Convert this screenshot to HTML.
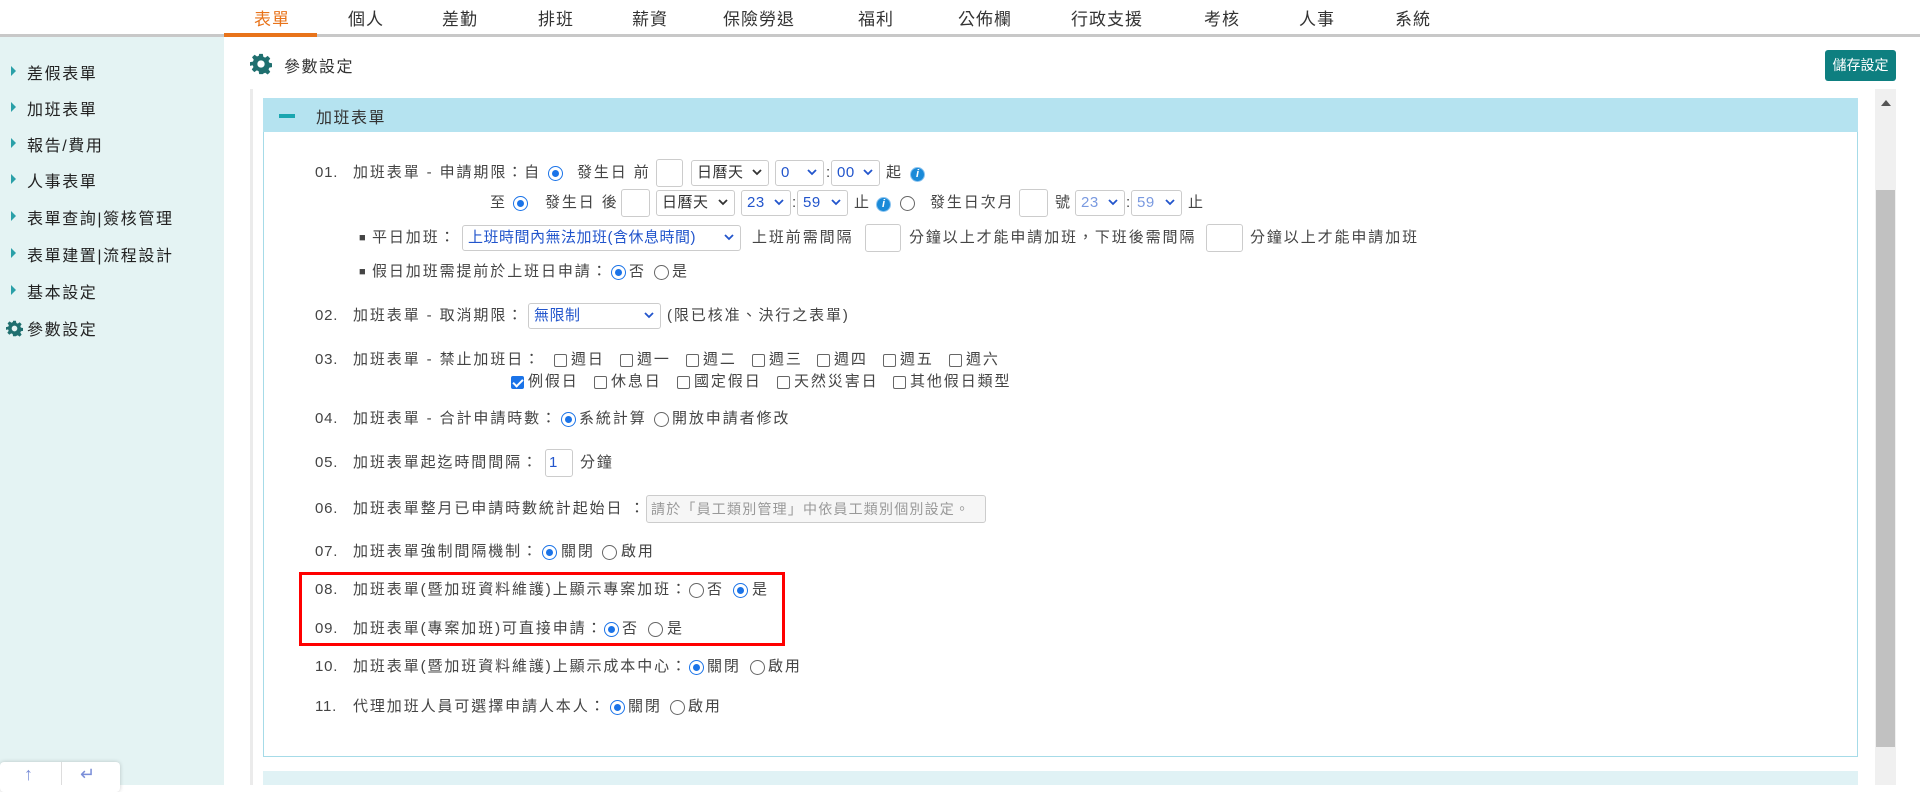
<!DOCTYPE html>
<html><head><meta charset="utf-8"><style>
*{margin:0;padding:0;box-sizing:border-box}
body{width:1920px;height:785px;overflow:hidden;background:#fff;font-family:"Liberation Sans","Noto Sans CJK TC",sans-serif;color:#444;position:relative}
.a{position:absolute;white-space:nowrap}
.nav{position:absolute;top:0;left:0;width:1920px;height:34px}
.nav span{position:absolute;top:5px;font-size:17px;color:#333;transform:translateX(-50%);white-space:nowrap;letter-spacing:1px}
.side{position:absolute;left:0;top:37px;width:224px;height:748px;background:#e4f3f3}
.side div{position:absolute;left:27px;font-size:16px;color:#222;letter-spacing:1.6px;white-space:nowrap}
.side div:before{content:"";position:absolute;left:-16px;top:6px;border-left:5px solid #2aa0a8;border-top:5px solid transparent;border-bottom:5px solid transparent}
.side div.g:before{display:none}
.r{position:absolute;left:0;height:24px;line-height:24px;font-size:15px;letter-spacing:1.9px;color:#444;width:1600px}
.r>*{position:absolute;top:0;white-space:nowrap}
.r>span:first-child{letter-spacing:.8px}
.rad{width:15px;height:15px;border:1px solid #666;border-radius:50%;top:5px;background:#fff}
.rad.on{border:1.5px solid #1a73e8}
.rad.on:after{content:"";position:absolute;left:2.5px;top:2.5px;width:7px;height:7px;border-radius:50%;background:#1a73e8}
.cb{width:13px;height:13px;border:1px solid #666;border-radius:2px;top:6px;background:#fff}
.cb.on{background:#1a73e8;border-color:#1a73e8}
.cb.on:after{content:"";position:absolute;left:3px;top:0px;width:4px;height:8px;border:solid #fff;border-width:0 2px 2px 0;transform:rotate(45deg)}
.sel{height:26px;top:-1px;border:1px solid #ccc;border-radius:3px;background:#fff;padding-left:5px;line-height:24px;color:#333;letter-spacing:.5px}
.sel.b{color:#2255cc}
.sel svg{position:absolute;right:6px;top:8px}
.inp{height:28px;top:-2px;border:1px solid #ccc;border-radius:3px;background:#fff}
.info{width:15px;height:15px;top:6px;border-radius:50%;background:#1a8ad8;color:#fff;font-size:11px;line-height:12px;text-align:center;font-weight:bold;letter-spacing:0;border:1.5px solid #8cc4f0}
</style></head><body>
<div class="nav">
<span style="left:272px;color:#e8731a">表單</span><span style="left:366px">個人</span><span style="left:460px">差勤</span><span style="left:556px">排班</span><span style="left:650px">薪資</span><span style="left:759px">保險勞退</span><span style="left:876px">福利</span><span style="left:985px">公佈欄</span><span style="left:1107px">行政支援</span><span style="left:1222px">考核</span><span style="left:1317px">人事</span><span style="left:1413px">系統</span>
</div>
<div class="a" style="left:0;top:34px;width:1920px;height:3px;background:#c8c8c8"></div>
<div class="a" style="left:224px;top:33px;width:93px;height:4px;background:#e8731a"></div>
<div class="side">
<div style="top:23px">差假表單</div><div style="top:59px">加班表單</div><div style="top:95px">報告/費用</div><div style="top:131px">人事表單</div><div style="top:168px">表單查詢|簽核管理</div><div style="top:205px">表單建置|流程設計</div><div style="top:242px">基本設定</div>
<div class="g" style="top:279px">參數設定</div>
<svg class="a" style="left:6px;top:283px" width="17" height="17" viewBox="0 0 24 24"><path fill="#1f6f6f" d="M10 1h4l.6 3.2 2 .9 2.7-1.9 2.8 2.8-1.9 2.7.9 2 3.2.6v4l-3.2.6-.9 2 1.9 2.7-2.8 2.8-2.7-1.9-2 .9L14 23h-4l-.6-3.2-2-.9-2.7 1.9-2.8-2.8 1.9-2.7-.9-2L0 14v-4l3.2-.6.9-2L2.2 4.7 5 1.9l2.7 1.9 2-.9zM12 8a4 4 0 100 8 4 4 0 000-8z"/></svg>
</div>
<svg class="a" style="left:250px;top:53px" width="22" height="22" viewBox="0 0 24 24"><path fill="#1f6f6f" d="M10 1h4l.6 3.2 2 .9 2.7-1.9 2.8 2.8-1.9 2.7.9 2 3.2.6v4l-3.2.6-.9 2 1.9 2.7-2.8 2.8-2.7-1.9-2 .9L14 23h-4l-.6-3.2-2-.9-2.7 1.9-2.8-2.8 1.9-2.7-.9-2L0 14v-4l3.2-.6.9-2L2.2 4.7 5 1.9l2.7 1.9 2-.9zM12 8a4 4 0 100 8 4 4 0 000-8z"/></svg>
<div class="a" style="left:284px;top:53px;font-size:16px;color:#333;letter-spacing:1.5px">參數設定</div>
<div class="a" style="left:1825px;top:50px;width:71px;height:31px;background:#0e7f80;border-radius:3px;color:#fff;font-size:14px;line-height:31px;text-align:center">儲存設定</div>
<div class="a" style="left:250px;top:89px;width:3px;height:696px;background:#ebebeb"></div>
<div class="a" style="left:263px;top:98px;width:1595px;height:659px;border:1px solid #a6dbe8"></div>
<div class="a" style="left:263px;top:98px;width:1595px;height:34px;background:#b5e3f0"></div>
<div class="a" style="left:279px;top:114px;width:16px;height:4px;background:#1aa6b0"></div>
<div class="a" style="left:316px;top:104px;font-size:16px;color:#333;letter-spacing:1.5px">加班表單</div>
<div class="a" style="left:1875px;top:89px;width:21px;height:696px;background:#f0f0f0"></div>
<div class="a" style="left:1876px;top:190px;width:19px;height:557px;background:#c1c1c1"></div>
<div class="a" style="left:1881px;top:100px;border-bottom:6px solid #555;border-left:5px solid transparent;border-right:5px solid transparent"></div>
<div class="a" style="left:263px;top:771px;width:1595px;height:14px;background:#e0f2f5"></div>
<div class="a" style="left:0;top:762px;width:120px;height:30px;background:#fff;border-radius:4px;box-shadow:0 0 4px rgba(0,0,0,.2)"></div>
<div class="a" style="left:61px;top:762px;width:1px;height:23px;background:#ddd"></div>
<div class="a" style="left:24px;top:764px;font-size:18px;color:#7a8ed8">↑</div>
<div class="a" style="left:80px;top:764px;font-size:18px;color:#7a8ed8">↵</div>

<div class="r" style="top:161px">
<span style="left:315px">01.</span><span style="left:353px">加班表單 - 申請期限：自</span><i class="rad on" style="left:548px"></i><span style="left:577px">發生日 前</span>
<i class="inp" style="left:656px;width:27px"></i>
<span class="sel" style="left:691px;width:78px">日曆天<svg width="10" height="8"><path d="M1 1l4 4 4-4" stroke="#333" stroke-width="1.8" fill="none"/></svg></span>
<span class="sel b" style="left:775px;width:49px">0<svg width="10" height="8"><path d="M1 1l4 4 4-4" stroke="#2255cc" stroke-width="1.8" fill="none"/></svg></span><span style="left:826px">:</span>
<span class="sel b" style="left:831px;width:49px">00<svg width="10" height="8"><path d="M1 1l4 4 4-4" stroke="#2255cc" stroke-width="1.8" fill="none"/></svg></span>
<span style="left:886px">起</span><i class="info" style="left:910px">i</i>
</div>
<div class="r" style="top:191px">
<span style="left:490px">至</span><i class="rad on" style="left:513px"></i><span style="left:545px">發生日 後</span>
<i class="inp" style="left:621px;width:29px"></i>
<span class="sel" style="left:656px;width:79px">日曆天<svg width="10" height="8"><path d="M1 1l4 4 4-4" stroke="#333" stroke-width="1.8" fill="none"/></svg></span>
<span class="sel b" style="left:741px;width:50px">23<svg width="10" height="8"><path d="M1 1l4 4 4-4" stroke="#2255cc" stroke-width="1.8" fill="none"/></svg></span><span style="left:792px">:</span>
<span class="sel b" style="left:797px;width:51px">59<svg width="10" height="8"><path d="M1 1l4 4 4-4" stroke="#2255cc" stroke-width="1.8" fill="none"/></svg></span>
<span style="left:854px">止</span><i class="info" style="left:876px">i</i><i class="rad" style="left:900px"></i>
<span style="left:930px">發生日次月</span><i class="inp" style="left:1019px;width:29px"></i><span style="left:1055px">號</span>
<span class="sel b" style="left:1075px;width:50px;color:#7a9ae0">23<svg width="10" height="8"><path d="M1 1l4 4 4-4" stroke="#2255cc" stroke-width="1.8" fill="none"/></svg></span><span style="left:1126px">:</span>
<span class="sel b" style="left:1131px;width:51px;color:#7a9ae0">59<svg width="10" height="8"><path d="M1 1l4 4 4-4" stroke="#2255cc" stroke-width="1.8" fill="none"/></svg></span><span style="left:1188px">止</span>
</div>
<div class="r" style="top:226px">
<span style="left:359px;font-size:11px">■</span><span style="left:372px">平日加班：</span>
<span class="sel b" style="left:462px;width:279px">上班時間內無法加班(含休息時間)<svg width="10" height="8"><path d="M1 1l4 4 4-4" stroke="#2255cc" stroke-width="1.8" fill="none"/></svg></span>
<span style="left:752px">上班前需間隔</span><i class="inp" style="left:865px;width:36px"></i>
<span style="left:909px">分鐘以上才能申請加班，下班後需間隔</span><i class="inp" style="left:1206px;width:37px"></i>
<span style="left:1250px">分鐘以上才能申請加班</span>
</div>
<div class="r" style="top:260px">
<span style="left:359px;font-size:11px">■</span><span style="left:372px">假日加班需提前於上班日申請：</span><i class="rad on" style="left:611px"></i><span style="left:629px">否</span><i class="rad" style="left:654px"></i><span style="left:672px">是</span>
</div>
<div class="r" style="top:304px">
<span style="left:315px">02.</span><span style="left:353px">加班表單 - 取消期限：</span>
<span class="sel b" style="left:528px;width:133px">無限制<svg width="10" height="8"><path d="M1 1l4 4 4-4" stroke="#2255cc" stroke-width="1.8" fill="none"/></svg></span>
<span style="left:667px">(限已核准、決行之表單)</span>
</div>
<div class="r" style="top:348px">
<span style="left:315px">03.</span><span style="left:353px">加班表單 - 禁止加班日：</span>
<i class="cb" style="left:554px"></i><span style="left:571px">週日</span><i class="cb" style="left:620px"></i><span style="left:637px">週一</span><i class="cb" style="left:686px"></i><span style="left:703px">週二</span><i class="cb" style="left:752px"></i><span style="left:769px">週三</span><i class="cb" style="left:817px"></i><span style="left:834px">週四</span><i class="cb" style="left:883px"></i><span style="left:900px">週五</span><i class="cb" style="left:949px"></i><span style="left:966px">週六</span>
</div>
<div class="r" style="top:370px">
<i class="cb on" style="left:511px"></i><span style="left:528px">例假日</span><i class="cb" style="left:594px"></i><span style="left:611px">休息日</span><i class="cb" style="left:677px"></i><span style="left:694px">國定假日</span><i class="cb" style="left:777px"></i><span style="left:794px">天然災害日</span><i class="cb" style="left:893px"></i><span style="left:910px">其他假日類型</span>
</div>
<div class="r" style="top:407px">
<span style="left:315px">04.</span><span style="left:353px">加班表單 - 合計申請時數：</span><i class="rad on" style="left:561px"></i><span style="left:579px">系統計算</span><i class="rad" style="left:654px"></i><span style="left:672px">開放申請者修改</span>
</div>
<div class="r" style="top:451px">
<span style="left:315px">05.</span><span style="left:353px">加班表單起迄時間間隔：</span><i class="inp" style="left:545px;width:28px"></i><span style="left:549px;color:#2255cc">1</span><span style="left:580px">分鐘</span>
</div>
<div class="r" style="top:497px">
<span style="left:315px">06.</span><span style="left:353px">加班表單整月已申請時數統計起始日 ：</span>
<span class="inp" style="left:646px;width:340px;background:#f6f6f6;color:#999;padding-left:4px;line-height:26px;font-size:14px;letter-spacing:1.2px">請於「員工類別管理」中依員工類別個別設定。</span>
</div>
<div class="r" style="top:540px">
<span style="left:315px">07.</span><span style="left:353px">加班表單強制間隔機制：</span><i class="rad on" style="left:542px"></i><span style="left:561px">關閉</span><i class="rad" style="left:602px"></i><span style="left:621px">啟用</span>
</div>
<div class="r" style="top:578px">
<span style="left:315px">08.</span><span style="left:353px">加班表單(暨加班資料維護)上顯示專案加班：</span><i class="rad" style="left:689px"></i><span style="left:707px">否</span><i class="rad on" style="left:733px"></i><span style="left:752px">是</span>
</div>
<div class="r" style="top:617px">
<span style="left:315px">09.</span><span style="left:353px">加班表單(專案加班)可直接申請：</span><i class="rad on" style="left:604px"></i><span style="left:622px">否</span><i class="rad" style="left:648px"></i><span style="left:667px">是</span>
</div>
<div class="a" style="left:299px;top:572px;width:486px;height:74px;border:3px solid #f00"></div>
<div class="r" style="top:655px">
<span style="left:315px">10.</span><span style="left:353px">加班表單(暨加班資料維護)上顯示成本中心：</span><i class="rad on" style="left:689px"></i><span style="left:707px">關閉</span><i class="rad" style="left:750px"></i><span style="left:768px">啟用</span>
</div>
<div class="r" style="top:695px">
<span style="left:315px">11.</span><span style="left:353px">代理加班人員可選擇申請人本人：</span><i class="rad on" style="left:610px"></i><span style="left:628px">關閉</span><i class="rad" style="left:670px"></i><span style="left:688px">啟用</span>
</div>
</body></html>
